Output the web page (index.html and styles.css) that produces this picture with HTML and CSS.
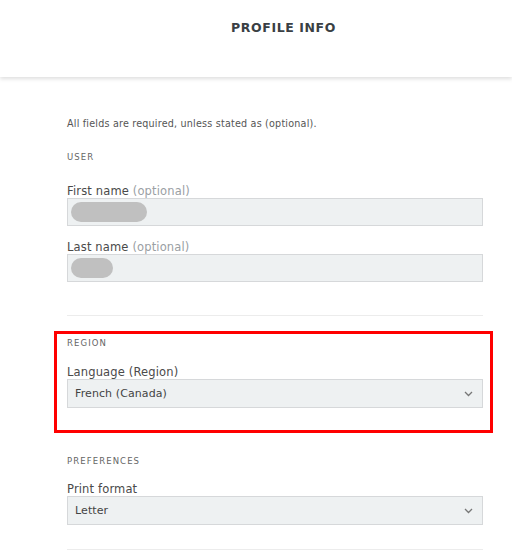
FILE: index.html
```html
<!DOCTYPE html>
<html>
<head>
<meta charset="utf-8">
<link rel="stylesheet" href="styles.css">
</head>
<body>
<header class="topbar">
  <h1 class="title">PROFILE INFO</h1>
</header>
<main class="content">
  <p class="note">All fields are required, unless stated as (optional).</p>
  <section class="group group-user">
    <h2 class="group-title">USER</h2>
    <div class="field">
      <label class="label">First name <span class="opt">(optional)</span></label>
      <div class="input"><span class="blur blur-long"></span></div>
    </div>
    <div class="field">
      <label class="label">Last name <span class="opt">(optional)</span></label>
      <div class="input"><span class="blur blur-short"></span></div>
    </div>
  </section>
  <hr class="divider">
  <section class="group group-highlight">
    <h2 class="group-title">REGION</h2>
    <div class="field">
      <label class="label">Language (Region)</label>
      <div class="input select"><span class="value">French (Canada)</span>
        <svg class="chev" width="9" height="6" viewBox="0 0 9 6"><path d="M1 1l3.5 3.5L8 1" fill="none" stroke="#777" stroke-width="1.3"/></svg>
      </div>
    </div>
  </section>
  <section class="group group-pref">
    <h2 class="group-title">PREFERENCES</h2>
    <div class="field">
      <label class="label">Print format</label>
      <div class="input select"><span class="value">Letter</span>
        <svg class="chev" width="9" height="6" viewBox="0 0 9 6"><path d="M1 1l3.5 3.5L8 1" fill="none" stroke="#777" stroke-width="1.3"/></svg>
      </div>
    </div>
  </section>
  <hr class="divider divider-last">
</main>
</body>
</html>
```

FILE: styles.css
```css
* { box-sizing: border-box; }
html, body { margin: 0; padding: 0; background: #fff; }
body { font-family: "DejaVu Sans", "Liberation Sans", sans-serif; color: #444; width: 512px; height: 560px; overflow: hidden; }
.topbar {
  height: 77px;
  background: #fff;
  box-shadow: 0 2px 4px rgba(0,0,0,0.13);
  display: flex;
  justify-content: center;
  padding-left: 55px;
  position: relative;
  z-index: 1;
}
.title {
  margin: 20px 0 0;
  font-size: 12.5px;
  font-weight: bold;
  letter-spacing: 0.6px;
  color: #3a3f44;
  line-height: 16px;
}
.content { padding: 41px 29px 0 67px; }
.note { margin: 0; font-size: 9.6px; letter-spacing: 0.2px; line-height: 12px; color: #555; }
.group-title { margin: 0; font-size: 8.5px; font-weight: normal; letter-spacing: 1.1px; color: #666; line-height: 12px; }
.label { display: block; font-size: 11.5px; letter-spacing: 0.15px; line-height: 12px; color: #4a4a4a; margin-bottom: 1px; }
.opt { color: #9aa0a4; }
.input {
  height: 28px;
  background: #eef1f2;
  border: 1px solid #d6d8da;
  display: flex;
  align-items: center;
  padding: 0 3px;
}
.blur { display: block; height: 20px; border-radius: 10px; background: #c0c0c0; }
.blur-long { width: 76px; }
.blur-short { width: 42px; }
.select { height: 29px; padding: 0 9px 0 7px; justify-content: space-between; }
.value { font-size: 11px; letter-spacing: 0.1px; color: #444; }

.group-user > .group-title { margin-top: 21px; }
.group-user .field { margin-top: 22px; }
.group-user .field + .field { margin-top: 15px; }

.divider { border: 0; border-top: 1px solid #ececec; margin: 33px 0 0; }

.group-highlight {
  margin: 15px -10px 0 -13px;
  border: 3px solid #ff0000;
  padding: 0 7px 22px 10px;
}
.group-highlight > .group-title { margin-top: 3px; }
.group-highlight .field { margin-top: 17px; }

.group-pref > .group-title { margin-top: 22px; }
.group-pref .field { margin-top: 16px; }
.divider-last { margin-top: 24px; }
```
